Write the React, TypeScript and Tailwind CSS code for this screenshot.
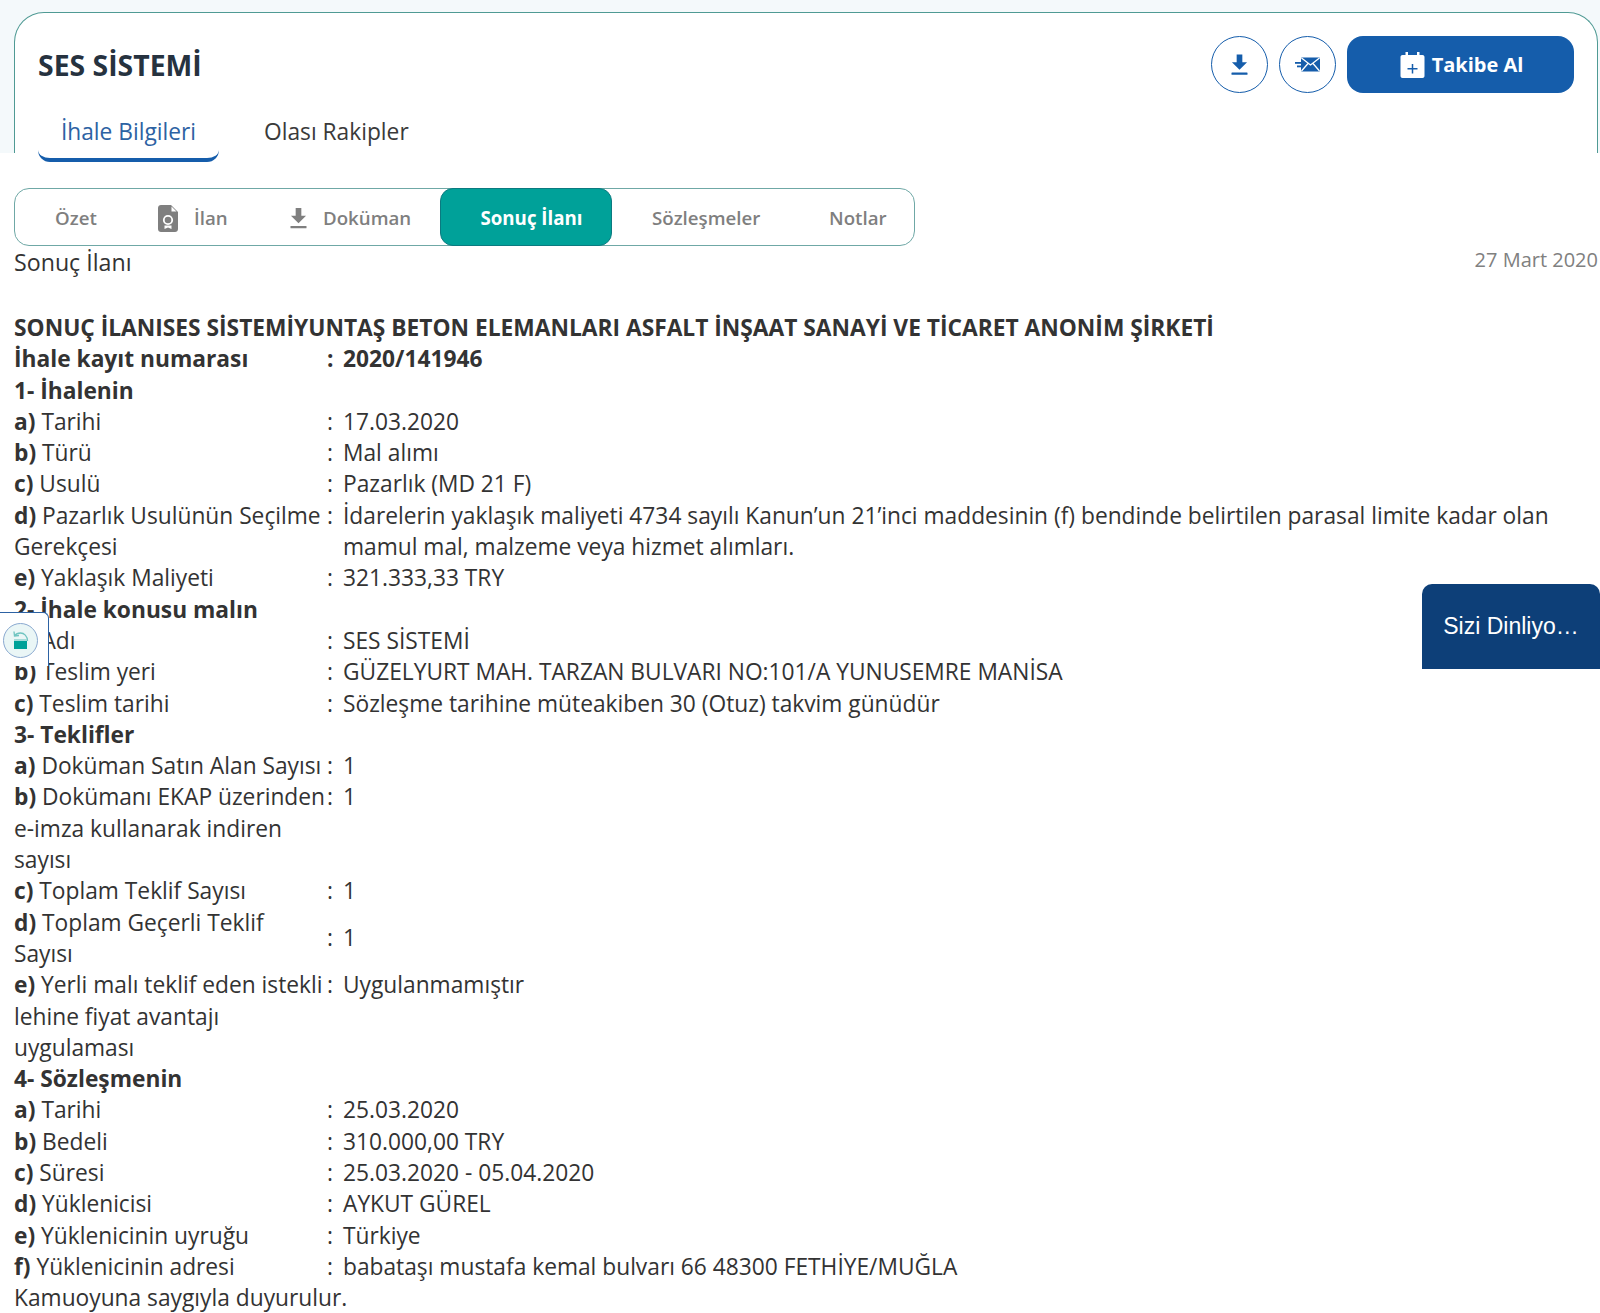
import type { ReactNode } from 'react'

type Row = { tag?: string; label: string; value: string; bold?: boolean; center?: boolean }

const rows: (Row | string)[] = [
  { label: 'İhale kayıt numarası', value: '2020/141946', bold: true },
  '1- İhalenin',
  { tag: 'a)', label: 'Tarihi', value: '17.03.2020' },
  { tag: 'b)', label: 'Türü', value: 'Mal alımı' },
  { tag: 'c)', label: 'Usulü', value: 'Pazarlık (MD 21 F)' },
  { tag: 'd)', label: 'Pazarlık Usulünün Seçilme Gerekçesi', value: 'İdarelerin yaklaşık maliyeti 4734 sayılı Kanun’un 21’inci maddesinin (f) bendinde belirtilen parasal limite kadar olan mamul mal, malzeme veya hizmet alımları.' },
  { tag: 'e)', label: 'Yaklaşık Maliyeti', value: '321.333,33 TRY' },
  '2- İhale konusu malın',
  { tag: 'a)', label: 'Adı', value: 'SES SİSTEMİ' },
  { tag: 'b)', label: 'Teslim yeri', value: 'GÜZELYURT MAH. TARZAN BULVARI NO:101/A YUNUSEMRE MANİSA' },
  { tag: 'c)', label: 'Teslim tarihi', value: 'Sözleşme tarihine müteakiben 30 (Otuz) takvim günüdür' },
  '3- Teklifler',
  { tag: 'a)', label: 'Doküman Satın Alan Sayısı', value: '1' },
  { tag: 'b)', label: 'Dokümanı EKAP üzerinden e-imza kullanarak indiren sayısı', value: '1' },
  { tag: 'c)', label: 'Toplam Teklif Sayısı', value: '1' },
  { tag: 'd)', label: 'Toplam Geçerli Teklif Sayısı', value: '1', center: true },
  { tag: 'e)', label: 'Yerli malı teklif eden istekli lehine fiyat avantajı uygulaması', value: 'Uygulanmamıştır' },
  '4- Sözleşmenin',
  { tag: 'a)', label: 'Tarihi', value: '25.03.2020' },
  { tag: 'b)', label: 'Bedeli', value: '310.000,00 TRY' },
  { tag: 'c)', label: 'Süresi', value: '25.03.2020 - 05.04.2020' },
  { tag: 'd)', label: 'Yüklenicisi', value: 'AYKUT GÜREL' },
  { tag: 'e)', label: 'Yüklenicinin uyruğu', value: 'Türkiye' },
  { tag: 'f)', label: 'Yüklenicinin adresi', value: 'babataşı mustafa kemal bulvarı 66 48300 FETHİYE/MUĞLA' },
]

function DownloadIcon({ className }: { className: string }) {
  return (
    <svg viewBox="0 0 18 22" className={className} fill="currentColor">
      <path d="M6 0h6v8h5l-8 8-8-8h5z" />
      <rect x="0.5" y="19" width="17" height="2.4" rx="0.6" />
    </svg>
  )
}

function MailIcon() {
  return (
    <svg viewBox="0 0 25 15" className="w-[25px] h-[15px]">
      <rect x="6" y="0.5" width="19" height="14" rx="1" fill="#155dab" />
      <path d="M6.500 1l9 7 9-7M6.500 14l6.500-7.500M24.500 14L18 6.500" fill="none" stroke="#fff" strokeWidth="1.300" />
      <rect x="0" y="5" width="6" height="1.800" fill="#155dab" />
      <rect x="2" y="8.500" width="4" height="1.800" fill="#155dab" />
    </svg>
  )
}

function CalendarPlusIcon() {
  return (
    <svg viewBox="0 0 24 26" className="w-[25px] h-[26px]">
      <path fill="#fff" d="M2 3h3V0h2.500v3h9V0H19v3h3c1.100 0 2 .9 2 2v19c0 1.100-.9 2-2 2H2c-1.100 0-2-.9-2-2V5c0-1.100.9-2 2-2z" />
      <path stroke="#155dab" strokeWidth="1.500" d="M12 12v9.500M7 16.750h10" />
    </svg>
  )
}

function DocIcon() {
  return (
    <svg viewBox="0 0 20 27" className="w-[20px] h-[27px]">
      <path fill="#7f7f7f" d="M3 0h10l7 7v17c0 1.700-1.300 3-3 3H3c-1.700 0-3-1.300-3-3V3c0-1.700 1.300-3 3-3z" />
      <path fill="#fff" d="M13.500 1.500l5 5h-5z" />
      <circle cx="10" cy="15" r="4.200" fill="none" stroke="#fff" strokeWidth="1.800" />
      <path fill="#fff" d="M6.500 20.500h7V24l-3.500-1.500L6.500 24z" />
    </svg>
  )
}

function LockIcon() {
  return (
    <svg viewBox="0 0 20 22" className="w-[20px] h-[22px]">
      <path fill="none" stroke="#6fc4c0" strokeWidth="1.300" d="M16.500 11C16.500 6 13 3 9.500 3S4.500 4.500 3.500 6" />
      <path fill="none" stroke="#6fc4c0" strokeWidth="1.300" d="M3 1.500l.5 4.500 4.500-.5" />
      <rect x="3" y="9" width="13" height="2" fill="#a6dcd9" />
      <rect x="3" y="11" width="13" height="8" fill="#00a199" />
    </svg>
  )
}

function SubTab({ children, className }: { children: ReactNode; className: string }) {
  return <div className={`flex items-center pt-[3px] text-[18.700px] font-semibold text-[#7f7f7f] ${className}`}>{children}</div>
}

export default function App() {
  return (
    <div className="relative w-[1600px] h-[1313px] overflow-hidden bg-white font-['Open_Sans',sans-serif] text-[#333]">
      <div className="h-[153px] bg-[#f4f9fb] pl-[14px] pr-[2px] pt-[12px]">
        <div className="h-[141px] rounded-t-[30px] border border-b-0 border-[#4f9a94] bg-white pl-[23px] pr-[23px]">
          <div className="flex items-center justify-between pt-[23px]">
            <h1 className="h-[57px] text-[28.400px] leading-[59px] font-bold text-[#26323f]">SES SİSTEMİ</h1>
            <div className="flex items-center">
              <div className="w-[57px] h-[57px] rounded-full border border-[#155dab] flex items-center justify-center mr-[11px]">
                <DownloadIcon className="w-[17px] h-[22px] text-[#155dab]" />
              </div>
              <div className="w-[57px] h-[57px] rounded-full border border-[#155dab] flex items-center justify-center mr-[11px]">
                <MailIcon />
              </div>
              <div className="w-[227px] h-[57px] rounded-[16px] bg-[#155dab] flex items-center justify-center gap-[7px] pl-[2px] text-white text-[20px] font-bold">
                <CalendarPlusIcon />
                <span>Takibe Al</span>
              </div>
            </div>
          </div>
          <div className="flex items-start mt-[20px]">
            <div className="w-[181px] h-[49px] rounded-b-[12px] border-b-4 border-[#155dab] text-center text-[22.750px] leading-[38px] text-[#2d62a3]">İhale Bilgileri</div>
            <div className="ml-[45px] text-[22.750px] leading-[38px] text-[#3a3a3a]">Olası Rakipler</div>
          </div>
        </div>
      </div>

      <div className="pl-[14px] pr-[2px]">
        <div className="mt-[35px] w-[901px] h-[58px] rounded-[15px] border border-[#6fa8a6] flex items-stretch">
          <SubTab className="pl-[40px] w-[143px]">Özet</SubTab>
          <SubTab className="w-[132px]"><DocIcon /><span className="ml-[16px]">İlan</span></SubTab>
          <SubTab className="w-[150px]"><DownloadIcon className="w-[17px] h-[21px] text-[#7f7f7f]" /><span className="ml-[16px]">Doküman</span></SubTab>
          <SubTab className="w-[172px] -my-px justify-center pl-[11px] rounded-[13px] border border-[#0b7a80] bg-[#00a199] !text-white !font-bold">Sonuç İlanı</SubTab>
          <SubTab className="pl-[40px] w-[217px]">Sözleşmeler</SubTab>
          <SubTab className="">Notlar</SubTab>
        </div>

        <div className="flex items-start justify-between h-[66px] pt-[1px]">
          <span className="text-[23.200px] leading-[31.300px]">Sonuç İlanı</span>
          <span className="text-[20px] leading-[25px] text-[#808080]">27 Mart 2020</span>
        </div>

        <div className="text-[22.750px] leading-[31.300px]">
          <div className="font-bold">SONUÇ İLANISES SİSTEMİYUNTAŞ BETON ELEMANLARI ASFALT İNŞAAT SANAYİ VE TİCARET ANONİM ŞİRKETİ</div>
          {rows.map((row, i) =>
            typeof row === 'string' ? (
              <div key={i} className="font-bold">{row}</div>
            ) : (
              <div key={i} className={`grid grid-cols-[312px_17px_1fr] ${row.bold ? 'font-bold' : ''}`}>
                <div>{row.tag && <b>{row.tag} </b>}{row.label}</div>
                <div className={`pl-[1px] ${row.center ? 'self-center' : ''}`}>:</div>
                <div className={row.center ? 'self-center' : ''}>{row.value}</div>
              </div>
            )
          )}
          <div>Kamuoyuna saygıyla duyurulur.</div>
        </div>
      </div>

      <div className="absolute left-0 top-[612px] w-[49px] h-[54px] bg-white border-t border-r border-[#2d62a3] rounded-tr-[6px] flex items-center pl-[3px] pt-[2px]">
        <div className="w-[35px] h-[35px] rounded-full bg-[#eaf6f6] border border-[#8aa9d0] flex items-center justify-center">
          <LockIcon />
        </div>
      </div>

      <div className="absolute left-[1422px] top-[584px] w-[178px] h-[85px] rounded-t-[10px] bg-[#0d3f78] flex items-center justify-center font-['Liberation_Sans',sans-serif] text-[23px] text-white">
        Sizi Dinliyo…
      </div>
    </div>
  )
}
